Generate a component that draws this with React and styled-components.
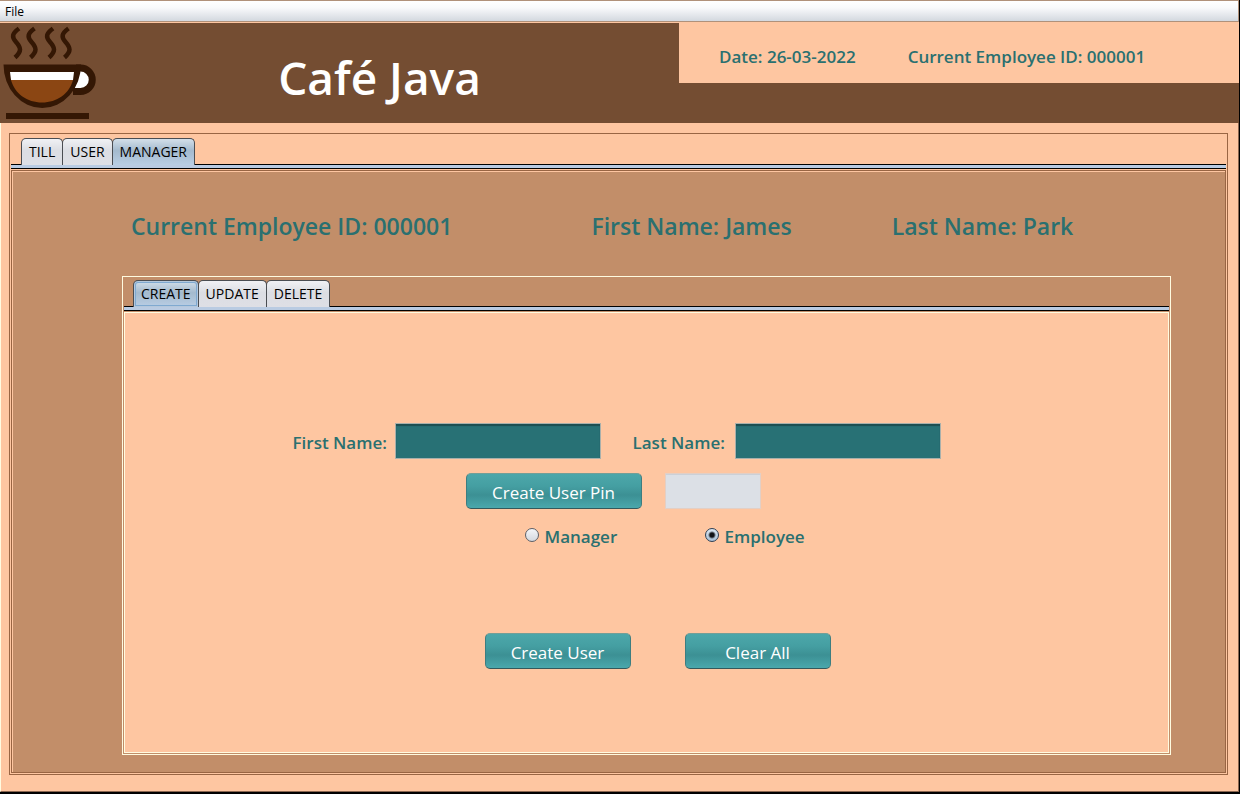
import React, { useState } from "react";
import styled, { createGlobalStyle } from "styled-components";

const color = {
  peach: "#fec6a1",
  tan: "#c28e69",
  brown: "#744d32",
  line: "#996543",
  cream: "#fffbe0",
  teal: "#2a7070",
  field: "#287175",
  ink: "#111418",
};

const GlobalStyle = createGlobalStyle`
  * { box-sizing: border-box; }
  body {
    margin: 0;
    font-family: "Open Sans", "Noto Sans", sans-serif;
    color: ${color.ink};
    background: ${color.peach};
  }
  button, input { font: inherit; }
`;

const Window = styled.div`
  display: flex;
  flex-direction: column;
  min-height: 100vh;
  background: ${color.peach};
  border-right: 1px solid #000;
  border-bottom: 2px solid #000;
`;

const MenuBar = styled.nav`
  display: flex;
  align-items: center;
  height: 22px;
  margin-bottom: 1px;
  border: 1px solid #b0917a;
  border-left: 0;
  background: linear-gradient(#ffffff 0%, #f8f9fb 35%, #d3d8df 100%);
`;

const MenuItem = styled.button`
  padding: 2px 5px 0;
  border: 0;
  background: none;
  font-size: 12px;
  line-height: 18px;
`;

const Header = styled.header`
  display: flex;
  align-items: flex-start;
  min-height: 100px;
  background: ${color.brown};
`;

const Brand = styled.div`
  display: flex;
  flex: 1;
  align-items: center;
  height: 100px;
`;

const Title = styled.h1`
  flex: 1;
  margin: 0 16px 0 0;
  padding-top: 8px;
  font-size: 46px;
  font-weight: 600;
  line-height: 64px;
  text-align: center;
  color: #fff;
`;

const SessionInfo = styled.div`
  display: flex;
  flex: 0 0 560px;
  align-items: center;
  gap: 52px;
  height: 60px;
  padding: 8px 40px 0;
  background: ${color.peach};
`;

const Label = styled.span`
  font-size: 17px;
  font-weight: 600;
  line-height: 24px;
  white-space: nowrap;
  color: ${color.teal};
`;

const Main = styled.main`
  display: flex;
  flex: 1;
  padding: 10px 10px 16px 8px;
  border-left: 1px solid ${color.cream};
  border-right: 1px solid #8a6650;
  border-bottom: 1px solid #8a6650;
`;

const Pane = styled.section`
  display: flex;
  flex: 1;
  flex-direction: column;
  padding: ${(p) => (p.$inner ? "3px 1px 1px" : "4px 1px 1px")};
  border: 1px solid ${(p) => (p.$inner ? color.cream : color.line)};
`;

const TabList = styled.div`
  display: flex;
  padding-left: ${(p) => (p.$inner ? 9 : 10)}px;
`;

const Tab = styled.button`
  height: 27px;
  margin: 0 0 -1px -1px;
  padding: 0 7px;
  border: 1px solid #4a4d52;
  border-bottom: 0;
  border-radius: 5px 5px 0 0;
  background: ${(p) =>
    p.$active
      ? "linear-gradient(#d3dfe9, #a4bace 45%, #b9cee4)"
      : "linear-gradient(#f0f1f4, #dbdde3 45%, #dedfe5)"};
  box-shadow: ${(p) => (p.$ring ? "inset 0 0 0 1px #b5c8dc, inset 0 0 0 2px #7fa9d0" : "none")};
  position: relative;
  z-index: ${(p) => (p.$active ? 1 : 0)};
  font-size: 14px;
  line-height: 24px;
  &:first-child { margin-left: 0; }
`;

const TabRule = styled.div`
  height: 5px;
  border: solid #000;
  border-width: 1px 0;
  background: #b9cbe2;
`;

const PaneBody = styled.div`
  display: flex;
  flex: 1;
  flex-direction: column;
  margin-top: 1px;
  padding: ${(p) => (p.$inner ? "0" : "37px 54px 17px 110px")};
  border: 1px solid ${(p) => (p.$inner ? color.cream : color.line)};
  background: ${(p) => (p.$inner ? color.peach : color.tan)};
  box-shadow: ${(p) => (p.$inner ? "none" : `inset 1px 1px 0 ${color.peach}`)};
`;

const Details = styled.div`
  display: grid;
  grid-template-columns: 460fr 300fr 279fr;
  margin-bottom: 32px;
  padding-left: 9px;
`;

const Detail = styled(Label)`
  font-size: 23px;
  line-height: 36px;
`;

const Form = styled.form`
  display: flex;
  flex-direction: column;
  gap: 14px;
  width: 708px;
  margin: 0 auto;
  padding: 110px 60px 0 0;
`;

const Row = styled.div`
  display: flex;
  align-items: center;
  padding-left: ${(p) => p.$indent || 0}px;
  gap: ${(p) => p.$gap || 0}px;
  margin-top: ${(p) => p.$space || 0}px;
`;

const FieldLabel = styled(Label).attrs({ as: "label" })`
  width: 102px;
  padding-top: 3px;
`;

const TextInput = styled.input`
  width: 206px;
  height: 36px;
  padding: 0 6px;
  border: 1px solid #a8b0ab;
  border-radius: 0;
  background: ${color.field};
  box-shadow: inset 0 2px 1px #1c4e51;
  color: #fff;
  font-size: 17px;
  outline: 0;
`;

const PinInput = styled(TextInput)`
  width: 96px;
  border-color: #e3cfc5;
  background: #dce0e6;
  box-shadow: inset 0 1px 0 #ccd0d7;
  color: ${color.ink};
`;

const Button = styled.button`
  width: ${(p) => (p.$wide ? 176 : 146)}px;
  height: 36px;
  padding: 4px 0 0;
  border: 1px solid #3d7d80;
  border-top-color: #719f98;
  border-bottom-color: #35585b;
  border-radius: 5px;
  background: linear-gradient(#4ca7aa 0%, #459fa2 35%, #3c9094 62%, #4aa8ac 100%);
  color: #fff;
  font-size: 17px;
  line-height: 30px;
`;

const Option = styled(Label).attrs({ as: "label" })`
  display: flex;
  align-items: center;
  gap: 6px;
  width: 180px;
`;

const Radio = styled.input`
  appearance: none;
  width: 14px;
  height: 14px;
  margin: 0 0 4px;
  border: 1px solid #5c6068;
  border-radius: 50%;
  background: linear-gradient(#f4f5f8, #d4d8df);
  &:checked {
    border-color: #2d4055;
    background:
      radial-gradient(circle, #101216 0 2px, transparent 4px),
      linear-gradient(#dce7f2, #a9c0d6);
  }
`;

const LogoSvg = styled.svg`
  display: block;
  flex: none;
  width: 96px;
  height: 100px;
`;

const Logo = () => (
  <LogoSvg viewBox="0 0 96 100" role="img" aria-label="Coffee cup">
    <g fill="none" stroke="#341704" strokeWidth="4.500">
      {[0, 15.5, 34, 49.5].map((x) => (
        <path
          key={x}
          transform={`translate(${x} 0)`}
          d="M19 5.500 C12 10.500 11.500 14 16 19 C21 24.500 22 28.500 15 34.500"
        />
      ))}
    </g>
    <path d="M76 45 H80.500 A11.500 11.500 0 0 1 80.500 68.500 H73" fill="#fff" stroke="#341704" strokeWidth="7" />
    <path d="M3.500 41.500 H81 A38.750 43.500 0 0 1 3.500 41.500 Z" fill="#341704" />
    <path d="M10 49 H74 L73 57 H11 Z" fill="#fff" />
    <path d="M11 57 H73 C69 71 57 79.500 42 79.500 S15 71 11 57 Z" fill="#8b4613" />
    <rect x="6" y="90" width="83" height="6" fill="#341704" />
  </LogoSvg>
);

const Tabs = ({ items, active, onSelect, inner }) => (
  <TabList role="tablist" $inner={inner}>
    {items.map((name) => (
      <Tab
        key={name}
        type="button"
        role="tab"
        aria-selected={name === active}
        $active={name === active}
        $ring={inner && name === active}
        onClick={() => onSelect(name)}
      >
        {name}
      </Tab>
    ))}
  </TabList>
);

const CreateUserForm = () => {
  const [role, setRole] = useState("Employee");
  return (
    <Form onSubmit={(e) => e.preventDefault()}>
      <Row>
        <FieldLabel htmlFor="first">First Name:</FieldLabel>
        <TextInput id="first" />
        <Row $indent={32}>
          <FieldLabel htmlFor="last">Last Name:</FieldLabel>
          <TextInput id="last" />
        </Row>
      </Row>
      <Row $indent={173} $gap={23}>
        <Button type="button" $wide>Create User Pin</Button>
        <PinInput aria-label="User pin" readOnly />
      </Row>
      <Row $indent={232} $space={2}>
        {["Manager", "Employee"].map((name) => (
          <Option key={name}>
            <Radio type="radio" name="role" checked={role === name} onChange={() => setRole(name)} />
            {name}
          </Option>
        ))}
      </Row>
      <Row $indent={192} $gap={54} $space={70}>
        <Button type="submit">Create User</Button>
        <Button type="reset">Clear All</Button>
      </Row>
    </Form>
  );
};

export default function App() {
  const [section, setSection] = useState("MANAGER");
  const [action, setAction] = useState("CREATE");
  return (
    <Window>
      <GlobalStyle />
      <MenuBar>
        <MenuItem type="button">File</MenuItem>
      </MenuBar>
      <Header>
        <Brand>
          <Logo />
          <Title>Café Java</Title>
        </Brand>
        <SessionInfo>
          <Label>Date: 26-03-2022</Label>
          <Label>Current Employee ID: 000001</Label>
        </SessionInfo>
      </Header>
      <Main>
        <Pane>
          <Tabs items={["TILL", "USER", "MANAGER"]} active={section} onSelect={setSection} />
          <TabRule />
          <PaneBody>
            <Details>
              <Detail>Current Employee ID: 000001</Detail>
              <Detail>First Name: James</Detail>
              <Detail>Last Name: Park</Detail>
            </Details>
            <Pane $inner>
              <Tabs inner items={["CREATE", "UPDATE", "DELETE"]} active={action} onSelect={setAction} />
              <TabRule />
              <PaneBody $inner>
                <CreateUserForm />
              </PaneBody>
            </Pane>
          </PaneBody>
        </Pane>
      </Main>
    </Window>
  );
}
